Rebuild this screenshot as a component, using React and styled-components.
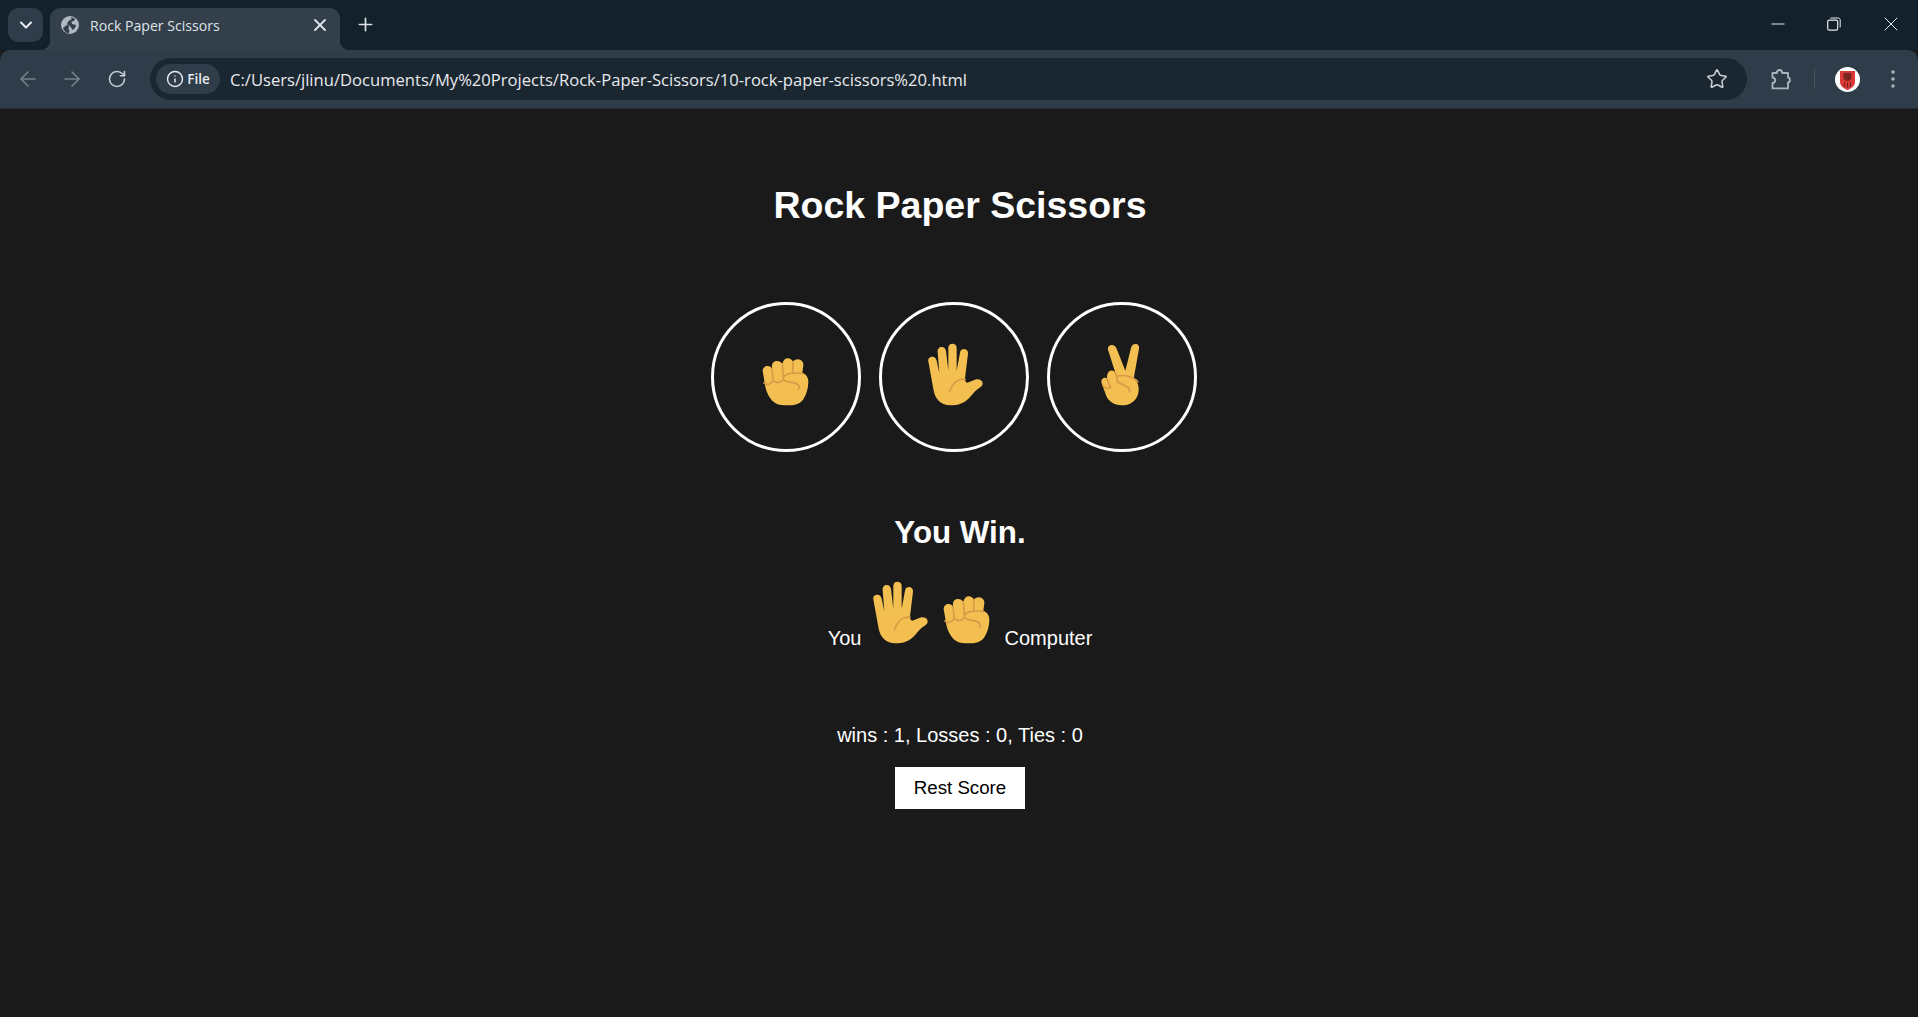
import React from "react";
import styled, { createGlobalStyle } from "styled-components";
import { ArrowLeft, ArrowRight, RotateCw, Info, Star, X, Plus, ChevronDown } from "lucide-react";

const Global = createGlobalStyle`
  html, body { margin: 0; padding: 0; background: #1a1a1a; }
  #root { min-height: 100vh; }
`;
const Window = styled.div`
  display: flex; flex-direction: column; height: 1017px; overflow: hidden;
  background: #1a1a1a; font-family: "Liberation Sans", Arial, sans-serif; color: #fff;
`;
const TabStrip = styled.div`
  display: flex; align-items: flex-end; height: 50px; background: #12212b; flex: none;
`;
const TabList = styled.div`
  width: 35px; height: 34px; margin: 0 7px 8px 8px; border-radius: 10px; background: #2f3c49;
  display: flex; align-items: center; justify-content: center; color: #e8eaed;
`;
const Tab = styled.div`
  position: relative; width: 290px; height: 42px; box-sizing: border-box; padding: 0 10px 8px 11px;
  background: #333f4b; border-radius: 10px 10px 0 0; display: flex; align-items: center;
  color: #dfe3e7;
  &::before, &::after {
    content: ""; position: absolute; bottom: 0; width: 10px; height: 10px;
  }
  &::before { left: -10px; background: radial-gradient(circle at 0 0, transparent 10px, #333f4b 10.5px); }
  &::after { right: -10px; background: radial-gradient(circle at 100% 0, transparent 10px, #333f4b 10.5px); }
`;
const TabTitle = styled.span`
  font: 400 14.1px "Open Sans", sans-serif; margin-left: 11px; flex: 1; white-space: nowrap;
`;
const NewTab = styled.div`
  margin: 0 0 15px 14px; width: 22px; height: 22px; display: flex; align-items: center; justify-content: center; color: #dfe3e7;
`;
const WinControls = styled.div`
  margin-left: auto; margin-right: -2px; display: flex; align-self: flex-start;
`;
const WinButton = styled.div`
  width: ${p => p.$w || 56}px; height: 48px; display: flex; align-items: center; justify-content: center; color: #e8eaed;
`;
const Toolbar = styled.div`
  flex: none; height: 59px; box-sizing: border-box; background: #2f3c49; border-radius: 10px 10px 0 0;
  border-bottom: 1px solid #222b33; display: flex; align-items: center; padding: 0 7px 0 10px;
`;
const NavButton = styled.div`
  width: 36px; height: 36px; flex: none; display: flex; align-items: center; justify-content: center;
  color: ${p => (p.$dim ? "#75808a" : "#c7cfd6")};
  margin-right: ${p => p.$mr || 0}px;
`;
const Omnibox = styled.div`
  flex: 1; height: 42px; border-radius: 21px; background: #1a2630; display: flex; align-items: center;
  padding: 0 19px 0 6px; margin: 0 16px 0 15px;
`;
const Chip = styled.div`
  width: 64px; height: 30px; border-radius: 15px; background: #2f3c49; display: flex; align-items: center;
  justify-content: center; gap: 3px; color: #e8eaed; font: 600 13.5px "Open Sans", sans-serif;
`;
const Url = styled.div`
  margin-left: 10px; flex: 1; color: #e8eaed; font: 400 16.6px "Open Sans", sans-serif; white-space: nowrap;
`;
const Sep = styled.div`
  width: 1px; height: 20px; background: #4a5661; margin: 0 14px 0 15px;
`;
const Page = styled.main`
  flex: 1; display: flex; flex-direction: column; align-items: center; padding: 75px 0 0 2px;
`;
const Title = styled.h1`
  margin: 0 0 75px; font-size: 37.5px; font-weight: 700; line-height: 43px;
`;
const Choices = styled.div`
  display: flex; gap: 8px; margin: 0 0 63px -2px;
`;
const Choice = styled.button`
  width: 150px; height: 150px; box-sizing: border-box; margin-right: 10px; padding: 0;
  border: 3px solid #fff; border-radius: 50%; background: transparent;
  display: flex; align-items: center; justify-content: center;
`;
const Verdict = styled.h2`
  margin: 0 0 31px; font-size: 31.3px; font-weight: 700; line-height: 36px;
`;
const Moves = styled.p`
  margin: 0 0 74px; font-size: 20px; line-height: 23px; text-align: center; white-space: nowrap; word-spacing: -1px;
`;
const EmojiSvg = styled.svg`
  width: 66px; height: 66px; vertical-align: -3px; overflow: visible; margin-left: ${p => p.$ml || 0}px;
`;
const Score = styled.p`
  margin: 0 0 20px; font-size: 20px; line-height: 23px;
`;
const Reset = styled.button`
  width: 130px; height: 42px; border: 0; padding: 0; background: #fff; color: #000;
  font: 400 18.7px "Liberation Sans", Arial, sans-serif;
`;

const SKIN = "#f3bf50";
const LINE = "#d99a48";

function Emoji({ kind, ml }) {
  return (
    <EmojiSvg viewBox="0 0 198 198" $ml={ml} aria-hidden="true">
      {kind === "rock" && (
        <g>
          <path fill={SKIN} d="M29 81C29 72 36 66 44 66C50 66 55 69 57 74L57 65C57 57 64 51 72 51C79 51 85 55 88 60C90 49 97 43 104 43C111 43 117 47 120 53C123 48 129 46 135 46C145 47 152 54 151 64L148 86C160 91 167 101 166 116C165 135 160 152 150 167C140 180 125 184 105 184C90 184 78 184 68 178C52 168 42 150 37 128Z" />
          <path fill="none" stroke={LINE} strokeWidth="5" strokeLinecap="round" d="M57 74L60 106M88 60L91 100M120 53L119 87M33 117C44 125 55 122 60 108C68 119 84 118 91 106M149 89C121 84 91 89 91 104C91 119 136 109 139 129L136 136" />
        </g>
      )}
      {kind === "paper" && (
        <g>
          <path fill={SKIN} d="M22 52C20 43 27 38 34 38C41 38 45 42 47 50L55 88L50 24C49 15 55 9 62 9C69 9 74 14 75 21L82 80L82 11C82 3 88 -1 94 -1C101 -1 107 3 107 11L107 80L117 26C118 18 123 15 130 15C137 16 142 21 141 29L132 103C132 112 134 116 139 116L162 107C170 104 180 106 184 113C187 120 183 127 176 131C165 137 158 146 148 158C130 178 112 184 87 184C62 184 42 168 37 135Z" />
          <path fill="none" stroke={LINE} strokeWidth="5" strokeLinecap="round" d="M132 106C113 102 95 115 85 144" />
        </g>
      )}
      {kind === "scissors" && (
        <g>
          <path fill={SKIN} d="M57 17C55 8 62 3 69 3C75 3 80 7 83 14L109 80L126 12C128 4 133 0 139 0C147 0 152 6 150 14L134 104C146 112 150 125 149 140C147 168 125 184 99 184C74 184 54 170 49 148L38 118C35 108 41 101 47 101C50 101 53 102 54 104C53 92 57 82 64 80C71 78 76 81 79 86Z" />
          <path fill="none" stroke={LINE} strokeWidth="5" strokeLinecap="round" d="M84 97C109 89 144 104 146 114M84 104C79 124 119 119 122 139L121 143M54 104L62 125M42 125C48 135 58 137 66 128M79 86C82 92 84 98 84 104" />
        </g>
      )}
    </EmojiSvg>
  );
}

const Globe = () => (
  <svg width="18" height="18" viewBox="0 0 18 18" aria-hidden="true">
    <circle cx="9" cy="9" r="9" fill="#aeb8c0" />
    <path fill="#333f4b" d="M2 12L7 8L8 10L7.5 13L8.5 15L7.5 17.5C5 17 3 15 2 12ZM10 1.2L14 2.6L13 5L10.5 5.5L11 8L15 9L14 12L11.5 14L10 11.5L8.5 9.5L6 7.5L8 4.5L10.5 3.5Z" />
  </svg>
);
const Minimize = () => (
  <svg width="14" height="14" viewBox="0 0 14 14" aria-hidden="true"><path d="M0.5 7H13.5" stroke="currentColor" strokeWidth="1" /></svg>
);
const Restore = () => (
  <svg width="14" height="14" viewBox="0 0 14 14" fill="none" stroke="currentColor" aria-hidden="true">
    <rect x="0.7" y="3.2" width="10" height="10" rx="1.6" strokeWidth="1.2" />
    <path d="M3.4 1H11.4C12.4 1 13.2 1.8 13.2 2.8V10.4" strokeWidth="1" />
  </svg>
);
const Close = () => (
  <svg width="14" height="14" viewBox="0 0 14 14" aria-hidden="true"><path d="M0.8 0.8L13.2 13.2M13.2 0.8L0.8 13.2" stroke="currentColor" strokeWidth="1" /></svg>
);
const Dots = () => (
  <svg width="6" height="20" viewBox="0 0 6 20" fill="#a9b4bd" aria-hidden="true">
    <circle cx="3" cy="3" r="1.8" /><circle cx="3" cy="10" r="1.8" /><circle cx="3" cy="17" r="1.8" />
  </svg>
);
const Extension = () => (
  <svg width="21" height="21" viewBox="0 0 21 21" fill="none" stroke="#a9b4bd" strokeWidth="1.9" strokeLinejoin="round" aria-hidden="true">
    <path d="M1.5 4H5.8C5.8 1.6 7 1 8.5 1C10 1 11.2 1.6 11.2 4H17V8.6C19.6 8.6 19.6 13.4 17 13.4V19.4H1.5V14C5 14 5 8.6 1.5 8.6Z" />
  </svg>
);
const Avatar = () => (
  <svg width="25" height="25" viewBox="0 0 25 25" aria-hidden="true">
    <circle cx="12.5" cy="12.5" r="12.5" fill="#fff" />
    <path fill="#d93a36" d="M5 4H20V15C20 19 16 21.5 12.5 23C9 21.5 5 19 5 15Z" />
    <path fill="#7d2422" d="M8.5 6.5C8.5 5.5 16.5 5.5 16.5 6.5V11C16.5 13 14 14 12.5 14C11 14 8.5 13 8.5 11Z" />
    <path stroke="#7d2422" strokeWidth="1.2" d="M9.5 15.5V20M12.5 15.5V21M15.5 15.5V20" />
  </svg>
);

export default function App() {
  return (
    <Window>
      <Global />
      <TabStrip>
        <TabList><ChevronDown size={20} strokeWidth={2.5} /></TabList>
        <Tab>
          <Globe />
          <TabTitle>Rock Paper Scissors</TabTitle>
          <X size={20} strokeWidth={2.2} />
        </Tab>
        <NewTab><Plus size={21} strokeWidth={1.9} /></NewTab>
        <WinControls>
          <WinButton><Minimize /></WinButton>
          <WinButton><Restore /></WinButton>
          <WinButton $w={58}><Close /></WinButton>
        </WinControls>
      </TabStrip>
      <Toolbar>
        <NavButton $dim $mr={8}><ArrowLeft size={24} strokeWidth={1.6} /></NavButton>
        <NavButton $dim $mr={9}><ArrowRight size={24} strokeWidth={1.6} /></NavButton>
        <NavButton><RotateCw size={20} strokeWidth={1.9} /></NavButton>
        <Omnibox>
          <Chip><Info size={18} strokeWidth={1.9} />File</Chip>
          <Url>C:/Users/jlinu/Documents/My%20Projects/Rock-Paper-Scissors/10-rock-paper-scissors%20.html</Url>
          <Star size={22} strokeWidth={1.7} color="#c7cfd6" />
        </Omnibox>
        <NavButton><Extension /></NavButton>
        <Sep />
        <NavButton $mr={10}><Avatar /></NavButton>
        <NavButton><Dots /></NavButton>
      </Toolbar>
      <Page>
        <Title>Rock Paper Scissors</Title>
        <Choices>
          <Choice><Emoji kind="rock" /></Choice>
          <Choice><Emoji kind="paper" /></Choice>
          <Choice><Emoji kind="scissors" /></Choice>
        </Choices>
        <Verdict>You Win.</Verdict>
        <Moves>
          You <Emoji kind="paper" /><Emoji kind="rock" ml={2} /> Computer
        </Moves>
        <Score>wins : 1, Losses : 0, Ties : 0</Score>
        <Reset>Rest Score</Reset>
      </Page>
    </Window>
  );
}
